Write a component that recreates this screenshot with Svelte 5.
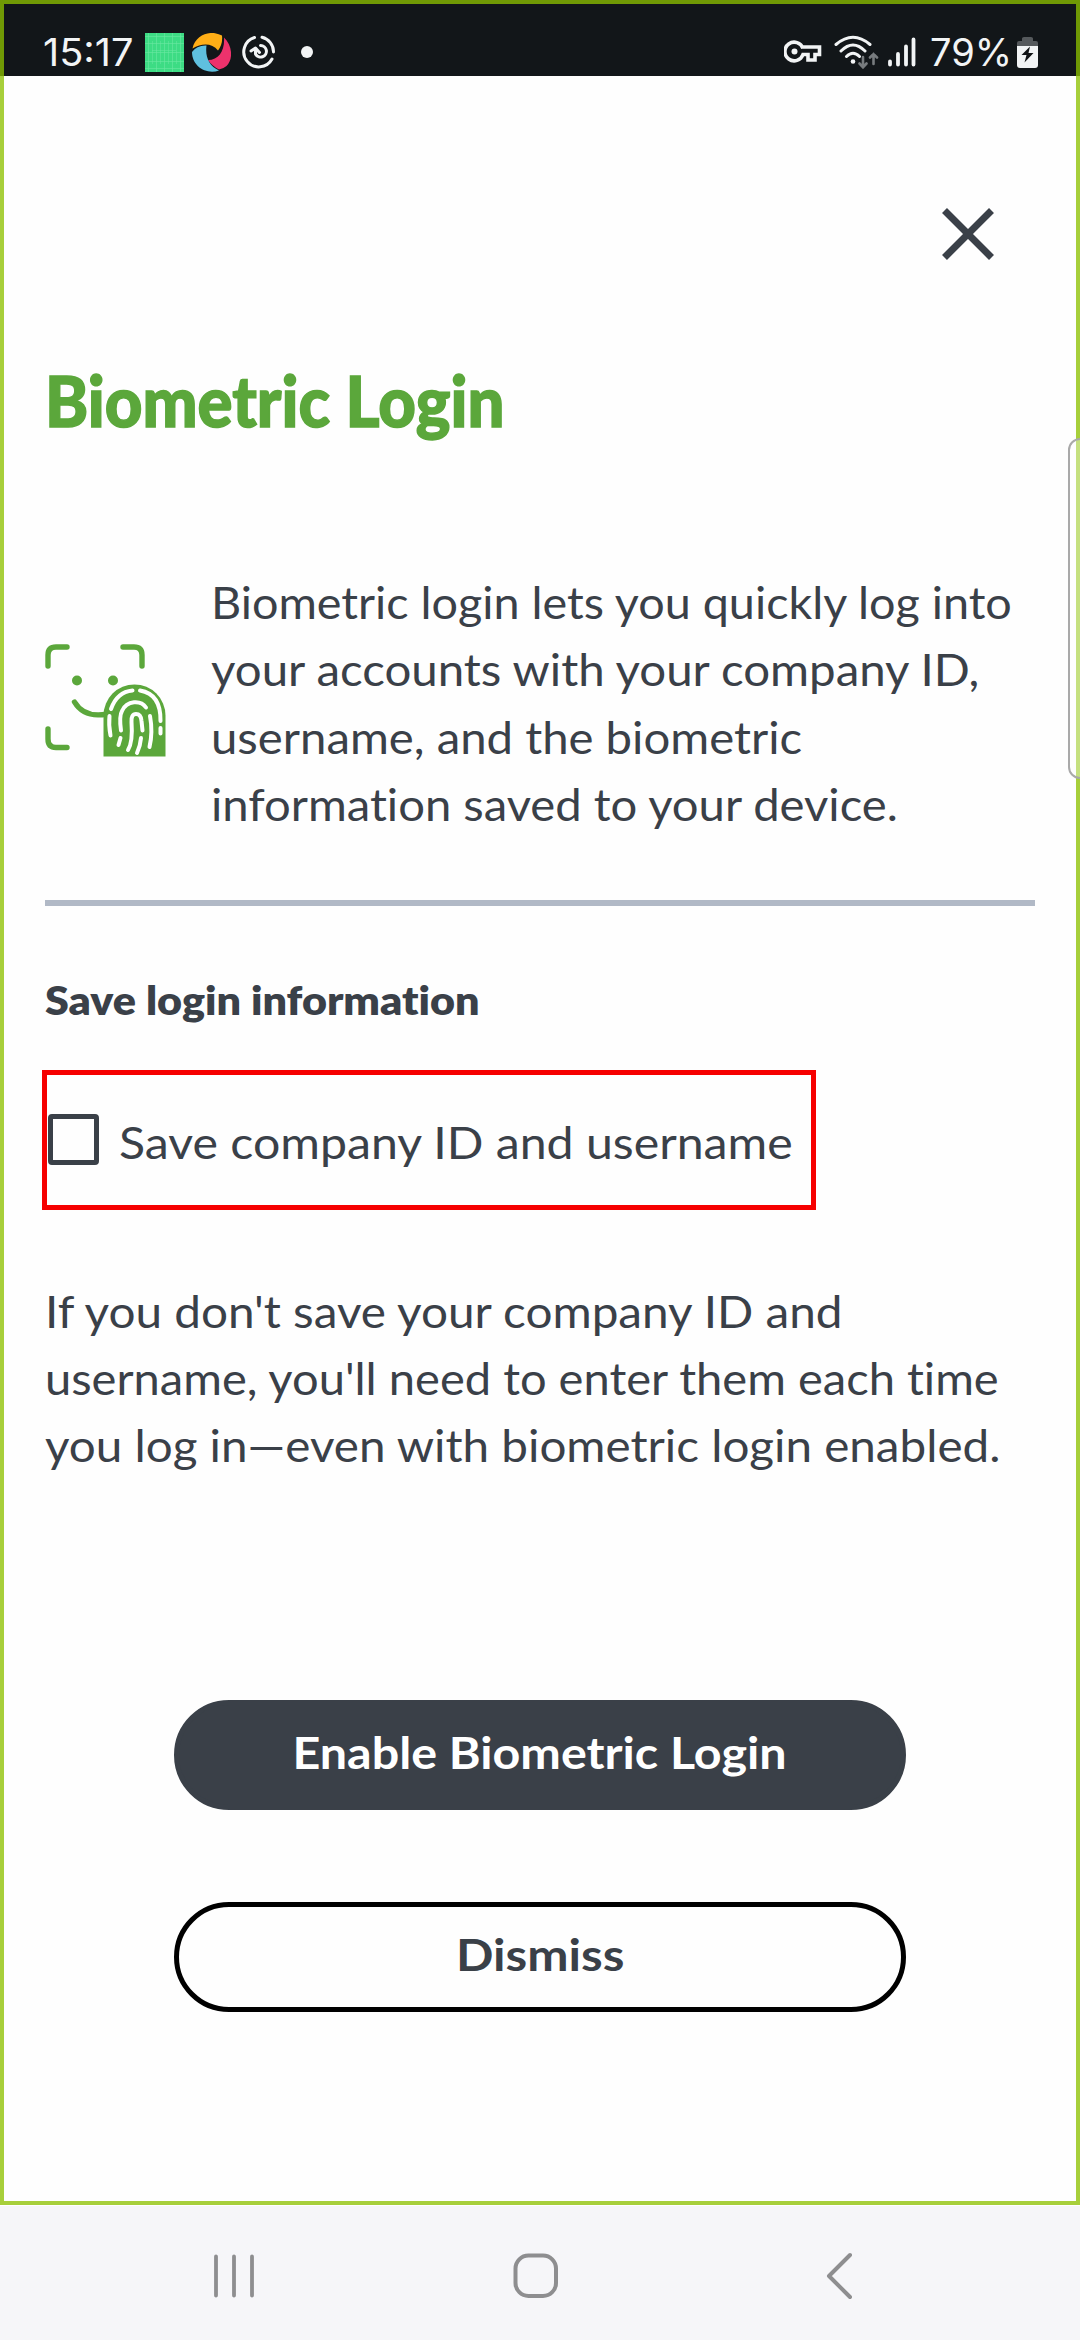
<script>
  const intro = [
    { text: 'Biometric login lets you quickly log into', w: 801 },
    { text: 'your accounts with your company ID,', w: 768 },
    { text: 'username, and the biometric', w: 591 },
    { text: 'information saved to your device.', w: 687 }
  ];
  const note = [
    { text: "If you don't save your company ID and", w: 797 },
    { text: "username, you'll need to enter them each time", w: 954 },
    { text: 'you log in\u2014even with biometric login enabled.', w: 955 }
  ];

  // Stretches a line of text so that it spans the given width.
  function fit(node, width) {
    node.style.transform = `scaleX(${width / node.offsetWidth})`;
  }
</script>

<div class="screen">
  <header class="status">
    <div class="left">
      <span class="time"><span class="fit" use:fit={90}>15:17</span></span>
      <svg class="tile" width="39" height="39" viewBox="0 0 39 39">
        <rect width="39" height="39" fill="#3ddc84" />
        <path d="M3.500 0V39M11.500 0V39M19.500 0V39M27.500 0V39M35.500 0V39M0 3.500H39M0 10.500H39M0 19.500H39M0 28.500H39M0 35.500H39" stroke="#6be7a3" stroke-width=".6" />
        <path d="M7.500 8V31M15.500 8V31M23.500 8V31M31.500 8V31M7 17.500H31" stroke="#6be7a3" stroke-width=".5" />
      </svg>
      <svg class="swirl" width="39" height="39" viewBox="0 0 39 39">
        <path d="M.500 15.500C3 4 14-1.500 23 .300Q27 1 30 2.500Q31 11 26 17.500C20 10 10 10 .500 15.500Z" fill="#ffae16" />
        <path d="M32 4.500C41 13 41 27 34.500 33Q31 36 27 36.500Q20 33 16 27C27 27 33 17 32 4.500Z" fill="#ed326c" />
        <path d="M0 19Q5 12 14.500 12.500C13 24 17 33 27 37.500C14 42 0 33 0 19Z" fill="#5fc0df" />
      </svg>
      <svg class="sync" width="34" height="34" viewBox="0 0 34 34" fill="none" stroke="#f2f4f5" stroke-width="3" stroke-linecap="round" stroke-linejoin="round">
        <path d="M12.500 2.500A15 15 0 1 0 30 24M20 2.300A15 15 0 0 1 31.500 17" />
        <path d="M18.500 10.500A5.800 5.800 0 1 1 13.500 19V14M9 16L13.500 13L17.500 17.500" />
      </svg>
      <span class="dot"></span>
    </div>
    <div class="right">
      <svg width="38" height="24" viewBox="0 0 38 24" fill="none" stroke="#f2f4f5" stroke-width="3.600">
        <path d="M19 8.500A9.300 9.300 0 1 0 19 14.500H24V20H31V14.500H35.500V7H19" />
        <circle cx="10.500" cy="11.500" r="3" fill="#f2f4f5" stroke="none" />
      </svg>
      <svg class="wifi" width="46" height="34" viewBox="0 0 46 34" fill="none" stroke-linecap="round">
        <g stroke="#f2f4f5" stroke-width="3">
          <path d="M2 9.500Q19-5 36 9.500M7 16Q19 4 31 16M12.500 21.500Q19 15 25.500 21.500" />
        </g>
        <circle cx="19" cy="26.500" r="2.300" fill="#f2f4f5" />
        <path d="M29 22V32M25.500 28.500L29 32.300L32.500 28.500M39.500 29V19M36 22.500L39.500 19L43 22.500" stroke="#777b7e" stroke-width="2.600" />
      </svg>
      <svg class="signal" width="28" height="30" viewBox="0 0 28 30" stroke="#f2f4f5" stroke-width="3.800" stroke-linecap="round">
        <path d="M2 24.500V27.500M10 17V27.500M18 9.500V27.500M25.500 2.500V27.500" />
      </svg>
      <span class="pct"><span class="fit" use:fit={82}>79%</span></span>
      <svg width="21" height="31" viewBox="0 0 21 31">
        <path d="M0 9V6Q0 4 2 4H5V1.500Q5 0 7 0H14Q16 0 16 1.500V4H19Q21 4 21 6V9Z" fill="#55595c" />
        <path d="M0 9H21V28Q21 31 18 31H3Q0 31 0 28Z" fill="#f2f4f5" />
        <path d="M13 9.500L4.500 18H9.500L7.500 25.500L16.500 16H11.500Z" fill="#111416" />
      </svg>
    </div>
  </header>

  <main>
    <div class="closebar">
      <svg width="52" height="52" viewBox="0 0 52 52" stroke="#3a4048" stroke-width="7">
        <path d="M2.500 2.500L49.500 49.500M49.500 2.500L2.500 49.500" />
      </svg>
    </div>
    <h1><span class="fit" use:fit={459}>Biometric Login</span></h1>

    <section class="intro">
      <svg class="bio" width="122" height="115" viewBox="0 0 122 115" fill="none">
        <g stroke="#5ba73b" stroke-width="5.400" stroke-linecap="round">
          <path d="M3 22V11Q3 3 11 3H22M78 3H89Q97 3 97 11V22M3 85V95Q3 103.500 11 103.500H22M29.500 58C36 69 46 73 62 70" />
        </g>
        <circle cx="32" cy="36.500" r="5" fill="#5ba73b" />
        <circle cx="68" cy="36.500" r="5" fill="#5ba73b" />
        <path d="M58.500 112.500V71.500A31 31 0 0 1 120.500 71.500V112.500Z" fill="#5ba73b" />
        <g stroke="#fff" stroke-width="4" stroke-linecap="round">
          <path d="M66 65Q72 48 87.500 46.500M95 46.500Q116 50 115.500 77M115.500 84V89.500M64.500 72Q63.500 81 65.500 91.500M76 86.500Q74 72 77 67C82 56 96 56 101 63.500M75.500 94L73.500 101M83 106Q88 98 86.500 78Q86 70 91 70Q96 70 96.500 77L97.500 86.500M96 94Q95.500 101 92 109M105 72Q108 88 104.500 103" />
        </g>
      </svg>
      <p>
        {#each intro as line}
          <span class="line"><span class="fit" use:fit={line.w}>{line.text}</span></span>
        {/each}
      </p>
    </section>

    <h2><span class="fit" use:fit={435}>Save login information</span></h2>

    <label class="option">
      <span class="box"></span>
      <span class="fit caption" use:fit={674}>Save company ID and username</span>
    </label>

    <p class="note">
      {#each note as line}
        <span class="line"><span class="fit" use:fit={line.w}>{line.text}</span></span>
      {/each}
    </p>

    <div class="actions">
      <button class="primary"><span class="fit mid" use:fit={494}>Enable Biometric Login</span></button>
      <button class="secondary"><span class="fit mid" use:fit={168}>Dismiss</span></button>
    </div>
  </main>

  <footer>
    <svg width="44" height="46" viewBox="0 0 44 46" stroke="#8e8e90" stroke-width="3.800" stroke-linecap="round">
      <path d="M3 3.500V42.500M21 3.500V42.500M39 3.500V42.500" />
    </svg>
    <svg class="home" width="46" height="46" viewBox="0 0 46 46" fill="none" stroke="#8e8e90" stroke-width="4">
      <rect x="2.500" y="2.500" width="40.500" height="40.500" rx="13" />
    </svg>
    <svg class="back" width="28" height="48" viewBox="0 0 28 48" fill="none" stroke="#8e8e90" stroke-width="4" stroke-linecap="round" stroke-linejoin="round">
      <path d="M24 3L3 24L24 45" />
    </svg>
  </footer>

  <div class="frame"></div>
  <div class="edge"></div>
</div>

<style>
  :global(body) { margin: 0; background: #fff; }
  .screen {
    position: relative;
    width: 1080px;
    height: 2340px;
    overflow: hidden;
    display: flex;
    flex-direction: column;
    background: #fefefe;
    color: #3a4048;
    font-family: Lato, sans-serif;
    font-variant-ligatures: none;
  }
  svg { display: block; flex: none; }
  .fit { display: inline-block; white-space: nowrap; transform-origin: left center; }
  .mid { transform-origin: center; }
  .status {
    height: 76px;
    flex: none;
    box-sizing: border-box;
    background: #121619;
    color: #f2f4f5;
    display: flex;
    justify-content: space-between;
    padding: 28px 42px 0 43px;
    font: 38px/48px Inter, sans-serif;
  }
  .left, .right { display: flex; align-items: center; height: 48px; }
  .time { width: 102px; }
  .swirl { margin-left: 8px; }
  .sync { margin-left: 11px; }
  .dot { width: 12px; height: 12px; border-radius: 50%; background: #f2f4f5; margin-left: 25px; }
  .wifi { margin-left: 12px; }
  .signal { margin-left: 8px; }
  .pct { width: 87px; margin-left: 14px; }
  main { height: 2130px; flex: none; box-sizing: border-box; padding: 0 45px; }
  .closebar { display: flex; justify-content: flex-end; padding: 132px 41px 0 0; }
  h1 {
    margin: 90px 0 0;
    height: 104px;
    font-size: 71px;
    line-height: 100px;
    font-weight: 900;
    color: #5ba73b;
    -webkit-text-stroke: 1.5px #5ba73b;
  }
  .intro {
    display: flex;
    align-items: center;
    gap: 44px;
    margin-top: 114px;
    padding-bottom: 62px;
    border-bottom: 6px solid #b1b9c6;
  }
  .bio { margin-top: -3px; }
  p { margin: 0; font-size: 44.5px; line-height: 67.4px; }
  .line { display: block; height: 67.4px; }
  h2 { margin: 64px 0 0; font-size: 40px; line-height: 60px; height: 61px; font-weight: 800; }
  .option {
    margin: 39px 0 0 -3px;
    width: 774px;
    height: 140px;
    box-sizing: border-box;
    border: 5px solid #f60000;
    display: flex;
    align-items: center;
    font-size: 44.5px;
    line-height: 60px;
  }
  .box { width: 51px; height: 51px; box-sizing: border-box; border: 5px solid #3a4048; border-radius: 4px; margin: 0 20px 0 1px; flex: none; }
  .caption { padding-top: 5px; }
  .note { margin-top: 67px; }
  .actions { display: flex; flex-direction: column; align-items: center; gap: 92px; margin-top: 221px; }
  button {
    width: 732px;
    height: 110px;
    box-sizing: border-box;
    border-radius: 55px;
    padding: 0 0 6px;
    font: 700 44px/60px Lato, sans-serif;
    font-variant-ligatures: none;
    color: #3a4048;
    background: #fefefe;
    border: 5.5px solid #000;
  }
  .primary { color: #fff; background: #3a4048; border-color: #3a4048; }
  footer {
    flex: 1;
    background: #f6f6f9;
    display: flex;
    align-items: center;
    padding: 6px 0 0 213px;
  }
  .home { margin-left: 256px; }
  .back { margin-left: 267px; }
  .frame {
    position: absolute;
    inset: 0 0 135px;
    border: 4px solid rgb(140 192 0 / 77%);
    pointer-events: none;
  }
  .edge {
    position: absolute;
    top: 438px;
    right: -23px;
    width: 31px;
    height: 337px;
    border: 2px solid #a9a9a9;
    border-radius: 12px;
    background: rgb(255 255 255 / 35%);
  }
</style>
